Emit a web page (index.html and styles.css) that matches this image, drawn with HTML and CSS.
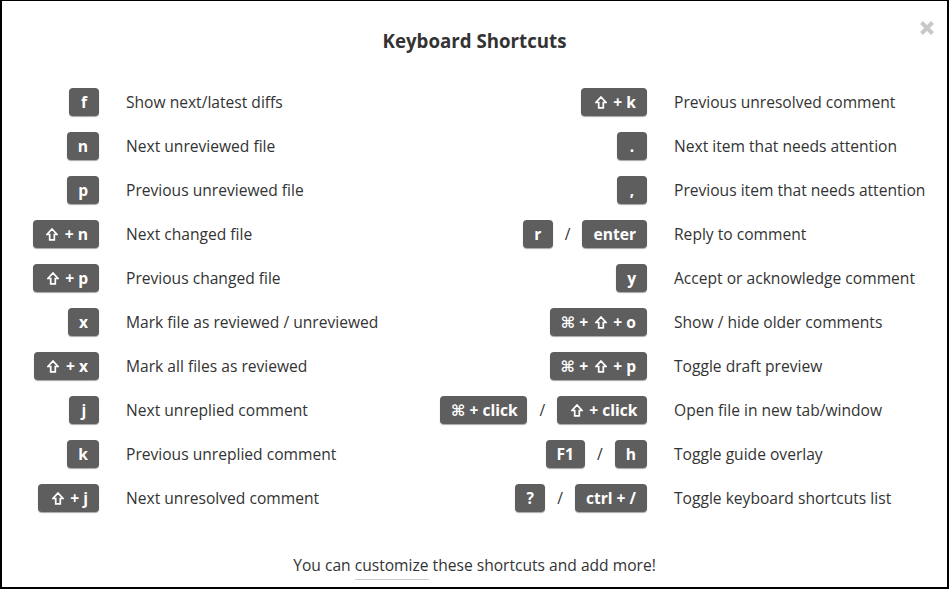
FILE: index.html
```html
<!DOCTYPE html>
<html lang="en">
<head>
<meta charset="utf-8">
<title>Keyboard Shortcuts</title>
<link rel="stylesheet" href="styles.css">
</head>
<body>
<div class="dialog">
  <button class="close" aria-label="Close">
    <svg width="16" height="16" viewBox="0 0 16 16"><path d="M2.5 2.5 L13.5 13.5 M13.5 2.5 L2.5 13.5" stroke="#c8c8c8" stroke-width="4" stroke-linecap="butt"/></svg>
  </button>
  <h1 class="title">Keyboard Shortcuts</h1>
  <div class="shortcuts">
    <div class="keys"><kbd>f</kbd></div><div class="desc">Show next/latest diffs</div>
    <div class="keys"><kbd><svg class="shift" viewBox="0 0 12 13" aria-label="Shift"><path d="M6 1 L11 6.5 H8.3 V11.8 H3.7 V6.5 H1 Z"/></svg> + k</kbd></div><div class="desc">Previous unresolved comment</div>

    <div class="keys"><kbd>n</kbd></div><div class="desc">Next unreviewed file</div>
    <div class="keys"><kbd>.</kbd></div><div class="desc">Next item that needs attention</div>

    <div class="keys"><kbd>p</kbd></div><div class="desc">Previous unreviewed file</div>
    <div class="keys"><kbd>,</kbd></div><div class="desc">Previous item that needs attention</div>

    <div class="keys"><kbd><svg class="shift" viewBox="0 0 12 13" aria-label="Shift"><path d="M6 1 L11 6.5 H8.3 V11.8 H3.7 V6.5 H1 Z"/></svg> + n</kbd></div><div class="desc">Next changed file</div>
    <div class="keys"><kbd>r</kbd><span class="sep">/</span><kbd>enter</kbd></div><div class="desc">Reply to comment</div>

    <div class="keys"><kbd><svg class="shift" viewBox="0 0 12 13" aria-label="Shift"><path d="M6 1 L11 6.5 H8.3 V11.8 H3.7 V6.5 H1 Z"/></svg> + p</kbd></div><div class="desc">Previous changed file</div>
    <div class="keys"><kbd>y</kbd></div><div class="desc">Accept or acknowledge comment</div>

    <div class="keys"><kbd>x</kbd></div><div class="desc">Mark file as reviewed / unreviewed</div>
    <div class="keys"><kbd>⌘ + <svg class="shift" viewBox="0 0 12 13" aria-label="Shift"><path d="M6 1 L11 6.5 H8.3 V11.8 H3.7 V6.5 H1 Z"/></svg> + o</kbd></div><div class="desc">Show / hide older comments</div>

    <div class="keys"><kbd><svg class="shift" viewBox="0 0 12 13" aria-label="Shift"><path d="M6 1 L11 6.5 H8.3 V11.8 H3.7 V6.5 H1 Z"/></svg> + x</kbd></div><div class="desc">Mark all files as reviewed</div>
    <div class="keys"><kbd>⌘ + <svg class="shift" viewBox="0 0 12 13" aria-label="Shift"><path d="M6 1 L11 6.5 H8.3 V11.8 H3.7 V6.5 H1 Z"/></svg> + p</kbd></div><div class="desc">Toggle draft preview</div>

    <div class="keys"><kbd>j</kbd></div><div class="desc">Next unreplied comment</div>
    <div class="keys"><kbd>⌘ + click</kbd><span class="sep">/</span><kbd><svg class="shift" viewBox="0 0 12 13" aria-label="Shift"><path d="M6 1 L11 6.5 H8.3 V11.8 H3.7 V6.5 H1 Z"/></svg> + click</kbd></div><div class="desc">Open file in new tab/window</div>

    <div class="keys"><kbd>k</kbd></div><div class="desc">Previous unreplied comment</div>
    <div class="keys"><kbd>F1</kbd><span class="sep">/</span><kbd>h</kbd></div><div class="desc">Toggle guide overlay</div>

    <div class="keys"><kbd><svg class="shift" viewBox="0 0 12 13" aria-label="Shift"><path d="M6 1 L11 6.5 H8.3 V11.8 H3.7 V6.5 H1 Z"/></svg> + j</kbd></div><div class="desc">Next unresolved comment</div>
    <div class="keys"><kbd>?</kbd><span class="sep">/</span><kbd>ctrl + /</kbd></div><div class="desc">Toggle keyboard shortcuts list</div>
  </div>
  <p class="footer">You can <a class="link" href="#">customize</a> these shortcuts and add more!</p>
</div>
</body>
</html>
```

FILE: styles.css
```css
html, body {
  margin: 0;
  padding: 0;
  background: #fff;
}

.dialog {
  position: relative;
  box-sizing: border-box;
  width: 949px;
  height: 589px;
  border: 2px solid #000;
  border-top-width: 1px;
  font-family: "Open Sans", "DejaVu Sans", sans-serif;
  color: #333;
  display: flex;
  flex-direction: column;
}

.close {
  position: absolute;
  top: 19px;
  right: 12px;
  padding: 0;
  border: 0;
  background: none;
  width: 16px;
  height: 16px;
  cursor: pointer;
}
.close svg { display: block; }

.title {
  margin: 27px 0 0;
  font-size: 18.7px;
  line-height: 26px;
  font-weight: 700;
  text-align: center;
  color: #333;
}

.shortcuts {
  margin-top: 26px;
  display: grid;
  grid-template-columns: 97px 287px 207px 1fr;
  grid-auto-rows: 44px;
  column-gap: 27px;
}

.keys {
  display: flex;
  align-items: center;
  justify-content: flex-end;
  gap: 12px;
}

.desc {
  display: flex;
  align-items: center;
  font-size: 15.6px;
  white-space: nowrap;
  color: #333;
}

kbd {
  display: inline-block;
  box-sizing: border-box;
  min-width: 30px;
  height: 28px;
  padding: 0 11px;
  border-radius: 4px;
  background: #5e5e5e;
  color: #fff;
  font-family: "Open Sans", "DejaVu Sans", sans-serif;
  font-weight: 700;
  font-size: 15.6px;
  line-height: 28px;
  text-align: center;
  box-shadow: 0 1px 1px rgba(0, 0, 0, 0.35);
  white-space: nowrap;
}

.shift {
  width: 12px;
  height: 13px;
  margin: 0 2.5px;
  vertical-align: -1px;
}
.shift path {
  fill: none;
  stroke: #fff;
  stroke-width: 1.7;
  stroke-linejoin: miter;
}

.sep {
  font-size: 15.6px;
  color: #333;
}

.footer {
  margin: auto 0 10px;
  text-align: center;
  font-size: 15.6px;
  line-height: 24px;
  color: #333;
}

.link {
  color: #333;
  text-decoration: none;
  border-bottom: 1px solid #ccc;
  padding-bottom: 3px;
}
```
